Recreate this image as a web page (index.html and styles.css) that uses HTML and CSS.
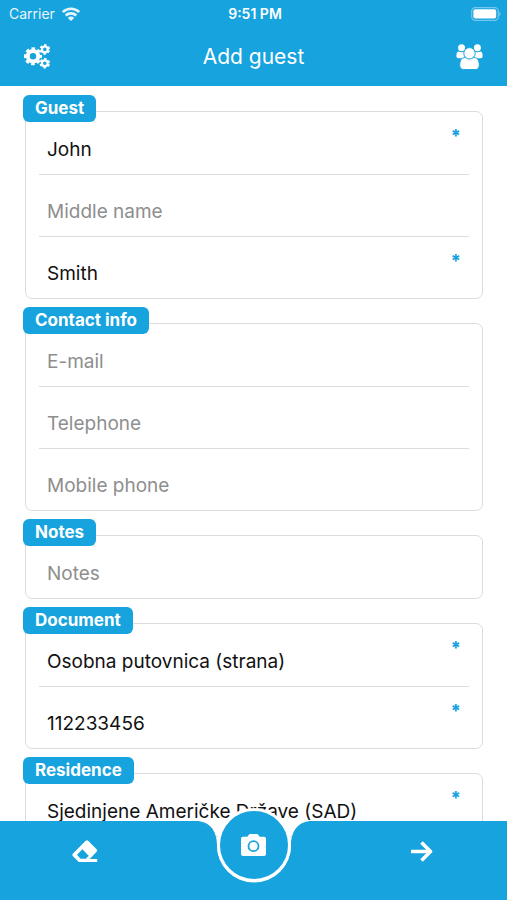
FILE: index.html
```html
<!DOCTYPE html>
<html lang="en">
<head>
<meta charset="utf-8">
<meta name="viewport" content="width=device-width, initial-scale=1">
<title>Add guest</title>
<link rel="stylesheet" href="styles.css">
</head>
<body>
<header class="header">
  <div class="status">
    <div class="carrier">
      <span>Carrier</span>
      <svg width="18" height="14" viewBox="0 0 18 14" fill="none" stroke="#fff" stroke-width="2.6" aria-hidden="true">
        <path d="M.8 5a11.800 11.800 0 0 1 16.400 0"/>
        <path d="M3.700 8.500a7.700 7.700 0 0 1 10.600 0"/>
        <path d="M9 14 5.800 10.900a4.600 4.600 0 0 1 6.400 0z" fill="#fff" stroke="none"/>
      </svg>
    </div>
    <span class="time">9:51 PM</span>
    <div class="battery">
      <svg width="30" height="14" viewBox="0 0 30 14" aria-hidden="true">
        <rect x=".7" y=".7" width="26.6" height="12.6" rx="3.6" fill="none" stroke="#fff" stroke-opacity=".4" stroke-width="1.2"/>
        <rect x="2.4" y="2.2" width="22.8" height="9.4" rx="2" fill="#fff"/>
        <path d="M28.4 4.8c1.5.6 1.5 3.8 0 4.4z" fill="#fff" fill-opacity=".5"/>
      </svg>
    </div>
  </div>
  <div class="toolbar">
    <button class="icon-button" type="button" aria-label="Settings">
      <svg width="27" height="25" viewBox="0 0 27 25" fill="none" stroke="#fff" aria-hidden="true">
        <circle cx="9" cy="12.300" r="5.200" stroke-width="4"/>
        <circle cx="9" cy="12.300" r="7.800" stroke-width="2.400" stroke-dasharray="3.600 2.526" stroke-dashoffset="1.800"/>
        <circle cx="20.800" cy="5.400" r="2.900" stroke-width="2.200"/>
        <circle cx="20.800" cy="5.400" r="4.400" stroke-width="1.800" stroke-dasharray="2.500 2.108" stroke-dashoffset="-1"/>
        <circle cx="20.800" cy="19.200" r="2.900" stroke-width="2.200"/>
        <circle cx="20.800" cy="19.200" r="4.400" stroke-width="1.800" stroke-dasharray="2.500 2.108" stroke-dashoffset="-1"/>
      </svg>
    </button>
    <h1 class="title">Add guest</h1>
    <button class="icon-button" type="button" aria-label="Guests">
      <svg width="27" height="26" viewBox="0 0 27 26" fill="#fff" aria-hidden="true">
        <circle cx="5.600" cy="3.800" r="3.500"/>
        <circle cx="21.400" cy="3.800" r="3.500"/>
        <path d="M2.400 7.400c1.900 1.100 4.400 1.100 6.300 0v6.800H2.400C.9 14.200.4 13.400.4 12c0-2.200.5-4.600 2-4.600z"/>
        <path d="M24.600 7.400c-1.900 1.100-4.400 1.100-6.300 0v6.800h6.300c1.500 0 2-.8 2-2.200 0-2.200-.5-4.600-2-4.600z"/>
        <path stroke="#16a3de" d="M8.600 13.600h9.800c3.200 0 4.900 3.300 4.900 7.700 0 2.600-1.500 4.300-4 4.300H7.700c-2.500 0-4-1.700-4-4.300 0-4.400 1.700-7.700 4.900-7.700z"/>
        <circle stroke="#16a3de" cx="13.500" cy="9.300" r="5.700"/>
      </svg>
    </button>
  </div>
</header>

<main class="content">
  <form class="form">
    <fieldset class="group">
      <legend class="tag">Guest</legend>
      <div class="field required"><input type="text" aria-label="First name" value="John" required></div>
      <div class="field"><input type="text" aria-label="Middle name" placeholder="Middle name"></div>
      <div class="field required"><input type="text" aria-label="Last name" value="Smith" required></div>
    </fieldset>
    <fieldset class="group">
      <legend class="tag">Contact info</legend>
      <div class="field"><input type="email" aria-label="E-mail" placeholder="E-mail"></div>
      <div class="field"><input type="tel" aria-label="Telephone" placeholder="Telephone"></div>
      <div class="field"><input type="tel" aria-label="Mobile phone" placeholder="Mobile phone"></div>
    </fieldset>
    <fieldset class="group">
      <legend class="tag">Notes</legend>
      <div class="field"><input type="text" aria-label="Notes" placeholder="Notes"></div>
    </fieldset>
    <fieldset class="group">
      <legend class="tag">Document</legend>
      <div class="field required"><input type="text" aria-label="Document type" value="Osobna putovnica (strana)" required></div>
      <div class="field required"><input type="text" aria-label="Document number" value="112233456" required></div>
    </fieldset>
    <fieldset class="group">
      <legend class="tag">Residence</legend>
      <div class="field required"><input type="text" aria-label="Country" value="Sjedinjene Američke Države (SAD)" required></div>
    </fieldset>
  </form>
</main>

<nav class="bottom-bar" aria-label="Actions">
  <button class="bar-side" type="button" aria-label="Clear">
    <svg width="26" height="23" viewBox="0 0 26 23" aria-hidden="true">
      <path fill="#fff" fill-rule="evenodd" d="M13.700.8q1.200-1 2.400 0l8.500 8.500q1.200 1.200 0 2.400L17.700 19h7.500v2.900H6.800L1 16.200q-1.200-1.300 0-2.600zM10.400 9.300l-5.400 5.500 3.600 3.900h5.200l2.900-3z"/>
    </svg>
  </button>
  <div class="notch">
    <svg class="notch-shape" viewBox="0 0 116 79" preserveAspectRatio="none" aria-hidden="true">
      <path fill="#16a3de" d="M0 0C13 0 21 9 21 24.500a37 37 0 0 0 74 0C95 9 103 0 116 0V79H0z"/>
    </svg>
    <button class="camera" type="button" aria-label="Scan document">
      <svg width="25" height="22" viewBox="0 0 25 22" aria-hidden="true">
        <path fill="#fff" d="M8.500 0h8l2.200 2.700H23q2 0 2 2V20q0 2-2 2H2q-2 0-2-2V4.700q0-2 2-2h4.300z"/>
        <circle cx="12.500" cy="12.200" r="5" fill="none" stroke="#16a3de" stroke-width="1.800"/>
      </svg>
    </button>
  </div>
  <button class="bar-side" type="button" aria-label="Next">
    <svg width="22" height="21" viewBox="0 0 22 21" fill="none" stroke="#fff" stroke-width="3.600" aria-hidden="true">
      <path d="M0 10.500h19M10.500 1.500l9 9-9 9" stroke-linejoin="round"/>
    </svg>
  </button>
</nav>
</body>
</html>
```
FILE: styles.css
```css
:root {
  --blue: #16a3de;
  --line: #dcdcdc;
}

* {
  box-sizing: border-box;
}

body {
  margin: 0;
  height: 100vh;
  display: flex;
  flex-direction: column;
  overflow: hidden;
  background: #fff;
  color: #111;
  font-family: Inter, "Liberation Sans", sans-serif;
}

button {
  border: 0;
  padding: 0;
  background: none;
  display: flex;
  align-items: center;
  justify-content: center;
}

svg {
  display: block;
}

.header {
  flex: none;
  background: var(--blue);
  color: #fff;
}

.status {
  display: grid;
  grid-template-columns: 1fr auto 1fr;
  align-items: center;
  height: 27px;
  padding: 0 6px 0 9px;
  font-size: 14px;
}

.carrier {
  display: flex;
  align-items: center;
  gap: 7px;
  opacity: 0.9;
}

.time {
  font-weight: 600;
}

.battery {
  justify-self: end;
}

.toolbar {
  display: flex;
  align-items: center;
  justify-content: space-between;
  height: 59px;
  padding: 0 24px;
}

.title {
  margin: 0;
  font-size: 21px;
  font-weight: 400;
}

.content {
  flex: 1;
  min-height: 0;
  overflow-y: auto;
  scrollbar-width: none;
}

.form {
  display: flex;
  flex-direction: column;
  gap: 24px;
  padding: 25px 24px 100px 25px;
}

.group {
  position: relative;
  min-width: 0;
  margin: 0;
  padding: 0 13px;
  border: 1px solid var(--line);
  border-radius: 7px;
}

.tag {
  position: absolute;
  top: -17px;
  left: -3px;
  padding: 0 12px;
  border-radius: 6px;
  background: var(--blue);
  color: #fff;
  font-size: 17px;
  font-weight: 700;
  line-height: 27px;
}

.field {
  position: relative;
  display: flex;
  height: 62px;
}

.field + .field {
  border-top: 1px solid var(--line);
}

.field input {
  width: 100%;
  padding: 12px 8px 0 8px;
  border: 0;
  outline: 0;
  background: none;
  color: inherit;
  font: inherit;
  font-size: 19px;
}

.field input::placeholder {
  color: #8e8e8e;
}

.required::after {
  content: "*";
  position: absolute;
  top: 12px;
  right: 8px;
  color: var(--blue);
  font-size: 18px;
  font-weight: 800;
  line-height: 24px;
}

.bottom-bar {
  position: fixed;
  inset: auto 0 0;
  display: grid;
  grid-template-columns: 1fr 116px 1fr;
  height: 79px;
}

.bar-side {
  padding: 0 0 18px;
  background: var(--blue);
}

.bar-side:first-child {
  padding-right: 25px;
}

.bar-side:last-child {
  padding-left: 25px;
}

.notch {
  position: relative;
}

.notch-shape {
  width: 100%;
  height: 100%;
}

.camera {
  position: absolute;
  top: -13px;
  left: 21px;
  width: 74px;
  height: 74px;
  border: 3px solid #fff;
  border-radius: 50%;
  background: var(--blue);
}
```
